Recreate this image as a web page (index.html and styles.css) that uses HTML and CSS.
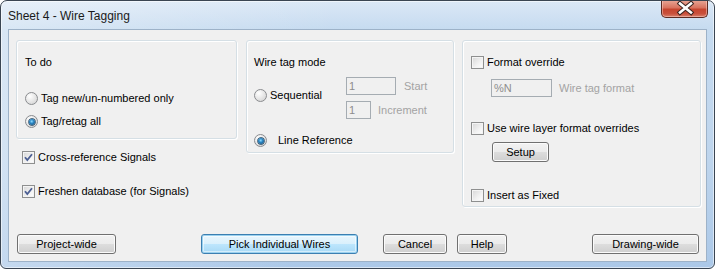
FILE: index.html
```html
<!DOCTYPE html>
<html>
<head>
<meta charset="utf-8">
<title>Sheet 4 - Wire Tagging</title>
<link rel="stylesheet" href="styles.css">
</head>
<body>
<div class="window">
  <div class="titlebar">
    <span class="title">Sheet 4 - Wire Tagging</span>
    <div class="close">
      <svg width="47" height="18" viewBox="0 0 47 18">
        <path d="M18 4.5 L29 13.5 M29 4.5 L18 13.5" stroke="#3b2420" stroke-width="4.6" stroke-linecap="square" fill="none"/>
        <path d="M18 4.5 L29 13.5 M29 4.5 L18 13.5" stroke="#ffffff" stroke-width="2.6" stroke-linecap="square" fill="none"/>
      </svg>
    </div>
  </div>
  <div class="client">
    <div class="top">
      <div class="col-left">
        <div class="group g-todo">
          <div class="gtitle">To do</div>
          <div class="opt first"><span class="radio"></span><span>Tag new/un-numbered only</span></div>
          <div class="opt second"><span class="radio on"></span><span>Tag/retag all</span></div>
        </div>
        <div class="opt chk xref"><span class="check on"><svg width="11" height="11" viewBox="0 0 11 11"><path d="M2 5.2 L4.3 8 L9 2.2" stroke="#4c5f93" stroke-width="1.8" fill="none"/></svg></span><span>Cross-reference Signals</span></div>
        <div class="opt chk fresh"><span class="check on"><svg width="11" height="11" viewBox="0 0 11 11"><path d="M2 5.2 L4.3 8 L9 2.2" stroke="#4c5f93" stroke-width="1.8" fill="none"/></svg></span><span>Freshen database (for Signals)</span></div>
      </div>
      <div class="group g-mode">
        <div class="gtitle">Wire tag mode</div>
        <div class="seq">
          <div class="opt seq-radio"><span class="radio"></span><span>Sequential</span></div>
          <div class="inputs">
            <div class="inrow"><span class="field f-start">1</span><span class="dim l-start">Start</span></div>
            <div class="inrow r2"><span class="field f-inc">1</span><span class="dim l-inc">Increment</span></div>
          </div>
        </div>
        <div class="opt lineref"><span class="radio on"></span><span>Line Reference</span></div>
      </div>
      <div class="group g-format">
        <div class="opt"><span class="check"></span><span>Format override</span></div>
        <div class="inrow fmt"><span class="field f-fmt">%N</span><span class="dim l-fmt">Wire tag format</span></div>
        <div class="opt layer"><span class="check"></span><span>Use wire layer format overrides</span></div>
        <button class="btn setup">Setup</button>
        <div class="opt fixed"><span class="check"></span><span>Insert as Fixed</span></div>
      </div>
    </div>
    <div class="buttons">
      <button class="btn b-project">Project-wide</button>
      <button class="btn default b-pick">Pick Individual Wires</button>
      <button class="btn b-cancel">Cancel</button>
      <button class="btn b-help">Help</button>
      <button class="btn b-drawing">Drawing-wide</button>
    </div>
  </div>
</div>
</body>
</html>
```
FILE: styles.css
```css
* { box-sizing: border-box; }
html, body { margin: 0; padding: 0; background: #ffffff; }
body { font-family: "Liberation Sans", Arial, sans-serif; font-size: 11px; color: #000; }

.window {
  width: 715px;
  height: 269px;
  border: 1px solid #3a4552;
  border-radius: 7px 7px 6px 6px;
  background:
    linear-gradient(100deg, rgba(255,255,255,0.35) 0, rgba(255,255,255,0.15) 25%, rgba(255,255,255,0) 45%),
    linear-gradient(to bottom, #dbe8f6 0, #c6dbf0 28px, #bed5ed 60%, #abc8e8 100%);
  box-shadow: inset 0 0 0 1px rgba(255,255,255,0.55);
  display: flex;
  flex-direction: column;
  overflow: hidden;
}

.titlebar {
  height: 28px;
  display: flex;
  align-items: flex-start;
  justify-content: space-between;
  padding-left: 7px;
  padding-right: 6px;
}
.title {
  font-size: 12px;
  line-height: 14px;
  margin-top: 8px;
  color: #1a1a1a;
}
.close {
  width: 47px;
  height: 18px;
  margin-top: -1px;
  border: 1px solid #5c2a22;
  border-top: none;
  border-radius: 0 0 5px 5px;
  background: linear-gradient(to bottom, #e9a898 0, #d9735f 45%, #c6452f 55%, #c9503c 80%, #d8806c 100%);
  box-shadow: inset 0 0 0 1px rgba(255,220,210,0.45);
  overflow: hidden;
}
.close svg { display: block; margin-top: -1px; }

.client {
  margin: 0 7px 6px 7px;
  height: 233px;
  border: 1px solid #9db2c8;
  background: #f0f0f0;
  display: flex;
  flex-direction: column;
  padding: 10px 0 7px 0;
}

.top {
  display: flex;
  align-items: flex-start;
  padding-left: 7px;
}

.group {
  border: 1px solid #d5dfe5;
  border-radius: 3px;
  box-shadow: inset 1px 1px 0 #ffffff, 1px 1px 0 #ffffff;
}
.gtitle { line-height: 13px; height: 13px; }

.col-left { width: 221px; display: flex; flex-direction: column; }
.g-todo { height: 99px; padding: 15px 8px 0 8px; }

.opt {
  display: flex;
  align-items: center;
  height: 13px;
  line-height: 13px;
  gap: 3px;
  white-space: nowrap;
}
.g-todo .first { margin-top: 23px; }
.g-todo .second { margin-top: 10px; }

.chk { padding-left: 6px; }
.xref { margin-top: 12px; }
.fresh { margin-top: 21px; }

.radio {
  width: 13px;
  height: 13px;
  flex: none;
  border-radius: 50%;
  border: 1px solid #8a8c8f;
  background: radial-gradient(circle at 35% 30%, #ffffff 0, #eeeeee 35%, #cfcfcf 100%);
  position: relative;
}
.radio.on::after {
  content: "";
  position: absolute;
  left: 2.5px; top: 2.5px;
  width: 6px; height: 6px;
  border-radius: 50%;
  background: radial-gradient(circle at 45% 40%, #8fdcff 0, #2a86c4 40%, #0d3f66 100%);
  box-shadow: 0 0 0 0.7px #173f5e;
}

.check {
  width: 13px;
  height: 13px;
  flex: none;
  border: 1px solid #8e8f8f;
  background: linear-gradient(135deg, #d6d6d6 0, #f2f2f2 60%, #ffffff 100%);
  box-shadow: inset 0 0 0 1px #f4f4f4;
  position: relative;
}
.check svg { display: block; position: absolute; left: 0; top: 0; }

.g-mode { width: 208px; height: 113px; margin-left: 9px; padding: 15px 7px 0 7px; }
.seq { display: flex; margin-top: 8px; }
.seq-radio { width: 92px; margin-top: 12px; }
.inputs { display: flex; flex-direction: column; }
.inrow { display: flex; align-items: center; height: 18px; white-space: nowrap; }
.inrow.r2 { margin-top: 6px; }
.field {
  height: 18px;
  line-height: 16px;
  border: 1px solid #a5acb2;
  background: #f0f0f0;
  color: #8d8d8d;
  padding-left: 2px;
  flex: none;
}
.f-start { width: 50px; }
.f-inc { width: 25px; }
.dim { color: #a3a3a3; }
.l-start { margin-left: 8px; }
.l-inc { margin-left: 7px; }
.lineref { margin-top: 15px; gap: 11px; }

.g-format { width: 239px; height: 167px; margin-left: 8px; padding: 15px 8px 0 8px; display: flex; flex-direction: column; align-items: flex-start; }
.fmt { margin-top: 10px; margin-left: 20px; }
.f-fmt { width: 61px; }
.l-fmt { margin-left: 7px; }
.layer { margin-top: 25px; }
.setup { width: 57px; margin-top: 7px; margin-left: 21px; }
.fixed { margin-top: 27px; }

.btn {
  height: 20px;
  padding: 0;
  font-family: "Liberation Sans", Arial, sans-serif;
  font-size: 11px;
  color: #000;
  border: 1px solid #707070;
  border-radius: 3px;
  background: linear-gradient(to bottom, #f2f2f2 0, #ebebeb 50%, #dddddd 50%, #cfcfcf 100%);
  box-shadow: inset 0 0 0 1px #fbfbfb;
  text-align: center;
  line-height: 18px;
  flex: none;
}
.btn.default {
  border-color: #3c7fb1;
  background: linear-gradient(to bottom, #eaf6fd 0, #d9f0fc 50%, #bee6fd 50%, #a7d9f5 100%);
  box-shadow: inset 0 0 0 1px #9ad1ef, inset 0 0 0 2px rgba(255,255,255,0.5);
}

.buttons {
  margin-top: auto;
  display: flex;
  padding-left: 8px;
}
.b-project { width: 99px; }
.b-pick { width: 157px; margin-left: 85px; }
.b-cancel { width: 64px; margin-left: 25px; }
.b-help { width: 50px; margin-left: 10px; }
.b-drawing { width: 107px; margin-left: 85px; }
```
